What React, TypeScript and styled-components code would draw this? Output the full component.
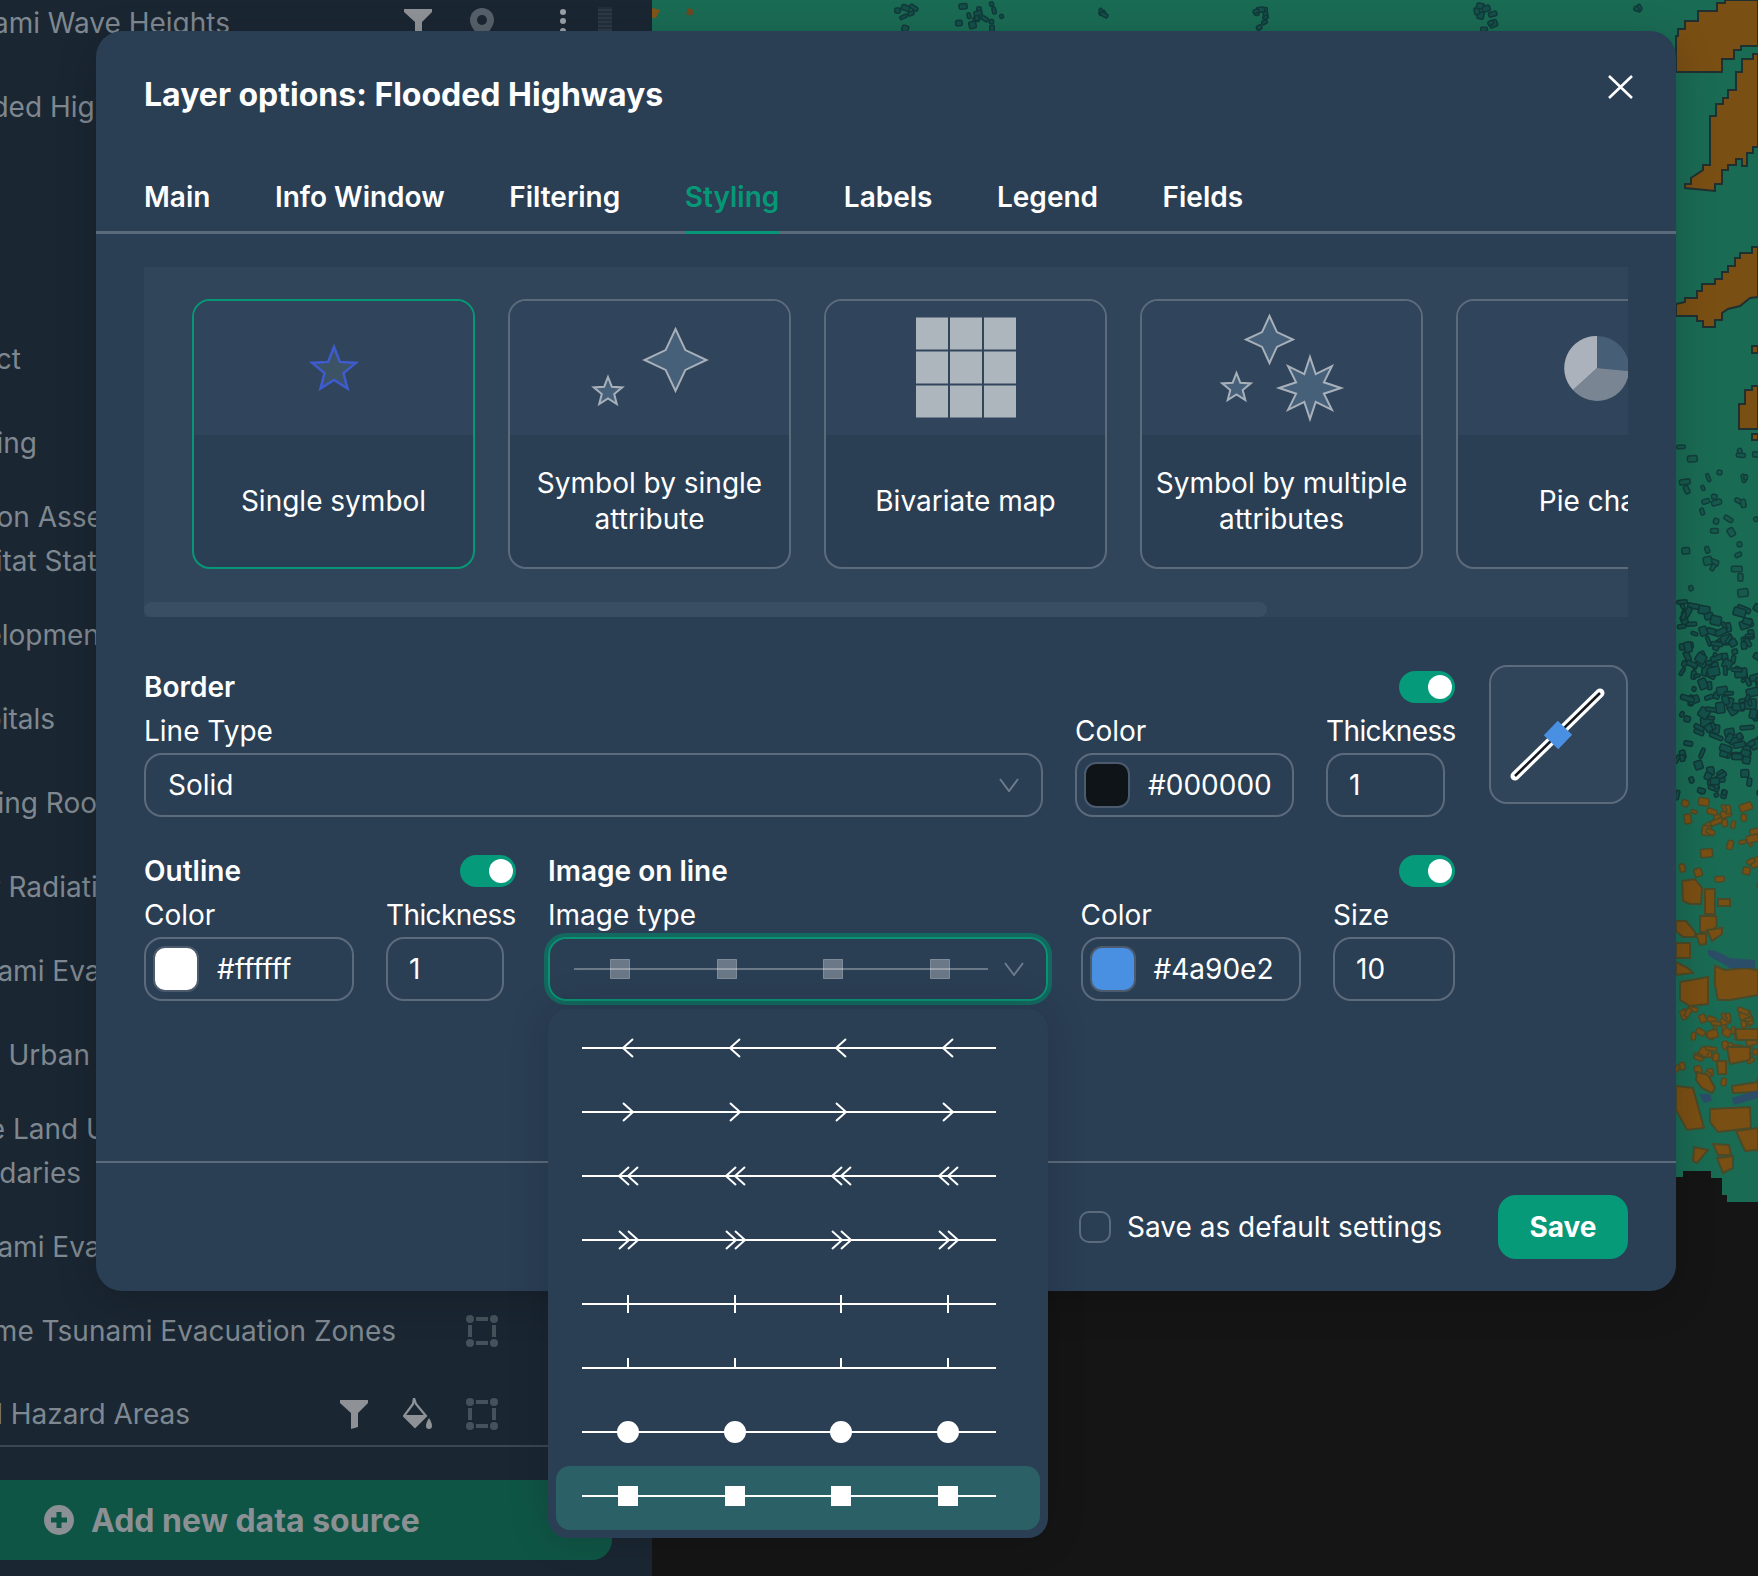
import React, { FC } from "react";
import styled, { createGlobalStyle } from "styled-components";

const GlobalStyle = createGlobalStyle`
  html, body {
    margin: 0;
    padding: 0;
    background: #151515;
  }
  * {
    box-sizing: border-box;
  }
  body {
    font-family: Inter, "Noto Sans", sans-serif;
    color: #fff;
  }
`;

const starPoints = (cx: number, cy: number, outer: number, inner: number, n: number) =>
  Array.from({ length: n * 2 }, (_, i) => {
    const r = i % 2 === 0 ? outer : inner;
    const a = (Math.PI * i) / n - Math.PI / 2;
    return `${(cx + r * Math.cos(a)).toFixed(1)},${(cy + r * Math.sin(a)).toFixed(1)}`;
  }).join(" ");

/* ---------- map ---------- */

const BROWN_AREAS = [
  "1676,36 1678,36 1678,29 1685,29 1685,21 1698,21 1698,11 1717,11 1717,3 1725,3 1725,0 1758,0 1758,46 1741,46 1741,50 1734,50 1734,59 1722,59 1722,72 1676,72",
  "1758,54 1753,54 1753,59 1742,59 1742,72 1736,72 1736,90 1728,90 1728,98 1723,98 1723,104 1716,104 1716,116 1710,116 1710,165 1703,165 1703,170 1691,178 1691,184 1685,184 1685,188 1715,191 1715,184 1722,184 1722,170 1728,170 1728,165 1736,165 1736,159 1742,159 1742,166 1747,166 1747,153 1753,153 1753,147 1758,147",
  "1758,247 1752,247 1752,253 1740,253 1740,258 1735,258 1735,266 1728,266 1728,272 1722,272 1722,279 1715,279 1715,284 1702,284 1702,291 1697,291 1697,298 1685,298 1685,302 1676,304 1676,316 1697,316 1697,321 1703,321 1703,327 1715,327 1715,320 1722,320 1722,313 1728,309 1740,306 1750,298 1758,297",
  "1758,386 1752,386 1752,390 1745,390 1745,404 1739,404 1739,429 1758,429",
  "1752,346 1758,346 1758,353 1752,353",
  "1752,434 1758,434 1758,440 1752,440",
  "1682,881 1695,879 1702,888 1701,904 1690,904 1683,901",
  "1705,889 1715,889 1715,914 1705,914",
  "1718,899 1730,899 1730,906 1718,906",
  "1676,921 1686,921 1695,932 1695,937 1683,937 1676,931",
  "1700,916 1716,916 1717,925 1712,932 1700,932",
  "1707,930 1722,928 1722,934 1712,941",
  "1696,934 1706,934 1706,944 1700,945",
  "1676,943 1690,943 1690,958 1676,958",
  "1676,962 1688,968 1693,973 1676,975",
  "1715,966 1725,970 1745,968 1758,970 1758,995 1730,1000 1718,1000 1715,985",
  "1680,982 1708,977 1708,1004 1690,1006 1680,1000",
  "1697,1072 1708,1075 1715,1088 1712,1093 1702,1088 1696,1080",
  "1676,1086 1693,1088 1704,1128 1687,1130 1676,1110",
  "1710,1109 1750,1107 1751,1128 1718,1132 1710,1122",
  "1736,1131 1758,1128 1758,1150 1745,1151",
  "1694,1147 1708,1150 1697,1163 1693,1161",
  "1713,1144 1729,1145 1731,1155 1718,1155",
  "1717,1158 1733,1156 1733,1168 1723,1173",
  "1735,1029 1758,1029 1758,1040 1737,1040",
  "1727,1047 1750,1047 1750,1060 1730,1064",
  "1717,1061 1726,1061 1726,1074 1718,1074",
  "1732,1086 1758,1082 1758,1092 1733,1093",
];

const WATER = [
  "1708,950 1716,951 1730,958 1755,960 1755,968 1730,968 1716,960 1708,955",
  "1732,1098 1758,1090 1758,1098 1734,1105",
  "1699,1094 1710,1094 1712,1101 1704,1103",
];

const TOP_CLUSTERS = [
  { seed: 3, x: 890, w: 24, n: 6 },
  { seed: 17, x: 952, w: 50, n: 14 },
  { seed: 31, x: 1096, w: 8, n: 3 },
  { seed: 41, x: 1244, w: 24, n: 8 },
  { seed: 53, x: 1472, w: 18, n: 8 },
  { seed: 67, x: 1630, w: 12, n: 2 },
];

const rand = (seed: number) => {
  const v = Math.sin(seed * 127.1) * 43758.5453;
  return v - Math.floor(v);
};

const Blocks: FC<{ count: number; seed: number; x: number; y: number; w: number; h: number; size: number; fill: string; stroke: string }> = ({
  count,
  seed,
  x,
  y,
  w,
  h,
  size,
  fill,
  stroke,
}) => (
  <g fill={fill} stroke={stroke} strokeWidth={1.5}>
    {Array.from({ length: count }, (_, i) => {
      const px = x + rand(seed + i) * w;
      const py = y + rand(seed + i + 0.37) * h;
      const bw = 3 + rand(seed + i + 0.61) * size;
      const bh = 3 + rand(seed + i + 0.83) * size * 0.7;
      const rot = rand(seed + i + 0.11) * 70 - 35;
      return (
        <rect
          key={i}
          x={px}
          y={py}
          width={bw}
          height={bh}
          rx={1.5}
          transform={`rotate(${rot.toFixed(0)} ${px.toFixed(0)} ${py.toFixed(0)})`}
        />
      );
    })}
  </g>
);

const MapView: FC = () => (
  <MapPane>
    <MapSvg viewBox="652 0 1106 1576">
      <polygon
        points="652,0 1758,0 1758,1202 1727,1202 1727,1195 1722,1195 1722,1178 1711,1178 1711,1171 1683,1171 1683,1177 652,1177"
        fill="#1a6b54"
      />
      {TOP_CLUSTERS.map((c) => (
        <Blocks key={c.seed} count={c.n} seed={c.seed} x={c.x} y={2} w={c.w} h={28} size={6} fill="#14504a" stroke="#123a3a" />
      ))}
      <Blocks count={34} seed={11} x={1676} y={445} w={82} h={155} size={8} fill="#165a4c" stroke="#123e3c" />
      <Blocks count={150} seed={29} x={1676} y={600} w={82} h={195} size={11} fill="#14504a" stroke="#113736" />
      <Blocks count={30} seed={47} x={1676} y={795} w={82} h={90} size={10} fill="#7a4f14" stroke="#4a4a28" />
      <Blocks count={50} seed={59} x={1676} y={1005} w={82} h={75} size={9} fill="#7a4f14" stroke="#4f4a26" />
      <g fill="#7a4f14" stroke="#203030" strokeWidth={2}>
        {BROWN_AREAS.slice(0, 6).map((p) => (
          <polygon key={p} points={p} />
        ))}
      </g>
      <g fill="#7a4f14" stroke="#4a4a28" strokeWidth={2}>
        {BROWN_AREAS.slice(6).map((p) => (
          <polygon key={p} points={p} />
        ))}
      </g>
      <g fill="#2c4d68">
        {WATER.map((p) => (
          <polygon key={p} points={p} />
        ))}
      </g>
      <polygon points="652,8 660,10 656,18 652,18" fill="#80551a" />
      <polygon points="688,8 694,10 692,16 686,14" fill="#6a4a20" />
    </MapSvg>
  </MapPane>
);

/* ---------- sidebar ---------- */

const Funnel: FC = () => (
  <svg width="28" height="30" viewBox="0 0 28 30">
    <path d="M0 1H28V4L18 14V28L11 30V14L0 4Z" fill="#8e9296" />
  </svg>
);

const Pin: FC = () => (
  <svg width="26" height="32" viewBox="0 0 26 32">
    <path d="M13 1a12 12 0 0 1 12 12c0 7-7 14-12 19C8 27 1 20 1 13A12 12 0 0 1 13 1Z" fill="#56606a" />
    <circle cx="13" cy="13" r="5" fill="#1a2632" />
  </svg>
);

const Dots: FC = () => (
  <svg width="8" height="32" viewBox="0 0 8 32">
    <circle cx="4" cy="5" r="3" fill="#9ba0a6" />
    <circle cx="4" cy="14" r="3" fill="#9ba0a6" />
    <circle cx="4" cy="24" r="3" fill="#9ba0a6" />
  </svg>
);

const Bucket: FC = () => (
  <svg width="30" height="32" viewBox="0 0 30 32">
    <path d="M11 0 13 6 23 18 12 29 1 18 10 6Z" fill="none" stroke="#8e9296" strokeWidth="2.2" />
    <path d="M1 17H23L12 29Z" fill="#8e9296" />
    <path d="M26 20c2 3 3 6 3 8a3 3 0 0 1-6 0c0-2 1-5 3-8Z" fill="#8e9296" />
  </svg>
);

const Selection: FC = () => (
  <svg width="32" height="32" viewBox="0 0 32 32" fill="#46515b">
    <circle cx="4" cy="4" r="4" />
    <circle cx="28" cy="4" r="4" />
    <circle cx="4" cy="28" r="4" />
    <circle cx="28" cy="28" r="4" />
    <rect x="10" y="2" width="12" height="4" />
    <rect x="10" y="26" width="12" height="4" />
    <rect x="2" y="10" width="4" height="12" />
    <rect x="26" y="10" width="4" height="12" />
  </svg>
);

interface LayerRowData {
  lines: { text: string; end: number }[];
  icons?: ("filter" | "pin" | "bucket" | "selection")[];
  menu?: boolean;
}

const LAYERS: LayerRowData[] = [
  { lines: [{ text: "Tsunami Wave Heights", end: 230 }], icons: ["filter", "pin"], menu: true },
  { lines: [{ text: "Flooded Highways", end: 180 }] },
  { lines: [] },
  { lines: [] },
  { lines: [{ text: "Tsunami Impact", end: 21 }] },
  { lines: [{ text: "Flooding", end: 37 }] },
  {
    lines: [
      { text: "Evacuation Assessment", end: 199 },
      { text: "Habitat Status", end: 128 },
    ],
  },
  { lines: [{ text: "Urban Development", end: 109 }] },
  { lines: [{ text: "Hospitals", end: 55 }] },
  { lines: [{ text: "Parking Rooftops", end: 164 }] },
  { lines: [{ text: "Solar Radiation", end: 131 }] },
  { lines: [{ text: "Tsunami Evacuation", end: 198 }] },
  { lines: [{ text: "Evacuation to Urban", end: 90 }] },
  {
    lines: [
      { text: "Future Land Use", end: 138 },
      { text: "Boundaries", end: 81 },
    ],
  },
  { lines: [{ text: "Tsunami Evacuation", end: 198 }] },
  { lines: [{ text: "Extreme Tsunami Evacuation Zones", end: 396 }], icons: ["selection"] },
  { lines: [{ text: "Flood Hazard Areas", end: 190 }], icons: ["filter", "bucket", "selection"] },
];

const ICONS = {
  filter: <Funnel />,
  pin: <Pin />,
  bucket: <Bucket />,
  selection: <Selection />,
};

const Sidebar: FC = () => (
  <SideColumn>
    <LayerList>
      {LAYERS.map((layer, i) => (
        <LayerRow key={i} $last={i === LAYERS.length - 1}>
          <LayerLines>
            {layer.lines.map((line) => (
              <LayerName key={line.text} $end={line.end}>
                <span>{line.text}</span>
              </LayerName>
            ))}
          </LayerLines>
          <LayerIcons>
            {layer.icons?.map((icon) => (
              <IconSlot key={icon}>{ICONS[icon]}</IconSlot>
            ))}
          </LayerIcons>
          <LayerTrail>
            {layer.menu && (
              <>
                <IconSlot>
                  <Dots />
                </IconSlot>
                <DragStrip />
              </>
            )}
          </LayerTrail>
        </LayerRow>
      ))}
    </LayerList>
    <AddSource>
      <svg width="30" height="30" viewBox="0 0 30 30">
        <circle cx="15" cy="15" r="15" fill="#8b9094" />
        <path d="M15 7v16M7 15h16" stroke="#0f5545" strokeWidth="5" />
      </svg>
      Add new data source
    </AddSource>
  </SideColumn>
);

/* ---------- style cards ---------- */

const SHAPE_FILL = "#46607a";
const SHAPE_LINE = "#a8b0ba";

const CardArt: FC<{ kind: number }> = ({ kind }) => (
  <CardSvg viewBox="2 2 279 134">
    {kind === 0 && (
      <polygon points={starPoints(142, 71, 23, 10, 5)} fill="#3c5366" stroke="#3f5bd0" strokeWidth="2.5" />
    )}
    {kind === 1 && (
      <g fill={SHAPE_FILL} stroke={SHAPE_LINE} strokeWidth="2">
        <polygon points={starPoints(167.5, 61, 31, 14, 4)} />
        <polygon points={starPoints(100, 93, 15, 6.5, 5)} />
      </g>
    )}
    {kind === 2 && (
      <g fill="#adb5bd">
        {[0, 1, 2].map((row) =>
          [0, 1, 2].map((col) => (
            <rect key={`${row}${col}`} x={92 + col * 34} y={18.5 + row * 34} width="32" height="32" />
          ))
        )}
      </g>
    )}
    {kind === 3 && (
      <g fill={SHAPE_FILL} stroke={SHAPE_LINE} strokeWidth="2">
        <polygon points={starPoints(129.5, 40.5, 23.5, 10.5, 4)} />
        <polygon points={starPoints(96.5, 89, 15, 6.5, 5)} />
        <polygon points={starPoints(170, 89, 31, 15, 8)} />
      </g>
    )}
    {kind === 4 && (
      <g>
        <path d="M141 69V37A32 32 0 0 1 173 72Z" fill="#475e77" />
        <path d="M141 69L173 72A32 32 0 0 1 117 91Z" fill="#798592" />
        <path d="M141 69L117 91A32 32 0 0 1 141 37Z" fill="#abb2bb" />
      </g>
    )}
  </CardSvg>
);

const CARDS = ["Single symbol", "Symbol by single attribute", "Bivariate map", "Symbol by multiple attributes", "Pie chart"];

const TABS = ["Main", "Info Window", "Filtering", "Styling", "Labels", "Legend", "Fields"];

/* ---------- line samples ---------- */

type LineKind = "left" | "right" | "left2" | "right2" | "tick" | "halfTick" | "dot" | "square";

const LINE_KINDS: LineKind[] = ["left", "right", "left2", "right2", "tick", "halfTick", "dot", "square"];
const MARK_X = [46, 153, 259, 366];

const Mark: FC<{ kind: LineKind; x: number; muted?: boolean }> = ({ kind, x, muted }) => {
  const y = 30;
  const chevron = (tip: number, back: number) => `M${x + back} ${y - 9}L${x + tip} ${y}L${x + back} ${y + 9}`;
  switch (kind) {
    case "left":
      return <path d={chevron(-5, 5)} fill="none" />;
    case "right":
      return <path d={chevron(5, -5)} fill="none" />;
    case "left2":
      return <path d={`${chevron(-9, 1)}${chevron(0, 10)}`} fill="none" />;
    case "right2":
      return <path d={`${chevron(1, -9)}${chevron(10, 0)}`} fill="none" />;
    case "tick":
      return <path d={`M${x} ${y - 9}V${y + 9}`} />;
    case "halfTick":
      return <path d={`M${x} ${y - 10}V${y}`} />;
    case "dot":
      return <circle cx={x} cy={y} r={10} fill="#fff" />;
    case "square":
      return muted ? (
        <rect x={x - 9.5} y={y - 9.5} width={19} height={19} fill="rgba(255,255,255,.3)" stroke="rgba(255,255,255,.3)" strokeWidth={1} />
      ) : (
        <rect x={x - 10} y={y - 10} width={20} height={20} fill="#fff" stroke="none" />
      );
  }
};

const LineSample: FC<{ kind: LineKind; muted?: boolean }> = ({ kind, muted }) => (
  <SampleSvg viewBox="0 0 414 60">
    <g stroke={muted ? "rgba(255,255,255,.3)" : "#fff"} strokeWidth={2}>
      <path d="M0 30H414" />
      {MARK_X.map((x) => (
        <Mark key={x} kind={kind} x={x} muted={muted} />
      ))}
    </g>
  </SampleSvg>
);

const ChevronDown: FC = () => (
  <ChevronSvg viewBox="0 0 20 14">
    <path d="M1 1L10 13L19 1" fill="none" stroke="#6d7b8b" strokeWidth="2" />
  </ChevronSvg>
);

/* ---------- dialog ---------- */

const ColorInput: FC<{ value: string }> = ({ value }) => (
  <ColorBox>
    <Swatch $color={value} />
    {value}
  </ColorBox>
);

const Toggle: FC = () => (
  <ToggleTrack>
    <ToggleKnob />
  </ToggleTrack>
);

const Dialog: FC = () => (
  <Modal>
    <ModalHeader>
      <ModalTitle>Layer options: Flooded Highways</ModalTitle>
      <CloseButton aria-label="Close">
        <svg width="25" height="24" viewBox="0 0 25 24">
          <path d="M1 1L24 23M24 1L1 23" stroke="#fff" strokeWidth="2.6" />
        </svg>
      </CloseButton>
    </ModalHeader>

    <TabBar>
      {TABS.map((tab) => (
        <Tab key={tab} $active={tab === "Styling"}>
          {tab}
        </Tab>
      ))}
    </TabBar>

    <ModalBody>
      <StylePanel>
        <CardRow>
          {CARDS.map((label, i) => (
            <StyleCard key={label} $active={i === 0}>
              <CardImage>
                <CardArt kind={i} />
              </CardImage>
              <CardLabel>{label}</CardLabel>
            </StyleCard>
          ))}
        </CardRow>
        <ScrollThumb />
      </StylePanel>

      <BorderSection>
        <FormColumn>
          <SectionHeader>
            Border
            <Toggle />
          </SectionHeader>
          <FieldRow>
            <Field $grow>
              <FieldLabel>Line Type</FieldLabel>
              <SelectBox>
                Solid
                <ChevronDown />
              </SelectBox>
            </Field>
            <Field $width={219}>
              <FieldLabel>Color</FieldLabel>
              <ColorInput value="#000000" />
            </Field>
            <Field $width={129}>
              <FieldLabel $narrow>Thickness</FieldLabel>
              <NumberBox $width={119}>1</NumberBox>
            </Field>
          </FieldRow>
        </FormColumn>
        <PreviewBox>
          <svg width="135" height="135" viewBox="1491 667 135 135">
            <path d="M1515 776L1600 693" stroke="#fff" strokeWidth="9" strokeLinecap="round" />
            <path d="M1515 776L1600 693" stroke="#12181d" strokeWidth="2.5" strokeLinecap="butt" />
            <rect x="1548" y="725" width="20" height="20" fill="#4a90e2" transform="rotate(44 1558 735)" />
          </svg>
        </PreviewBox>
      </BorderSection>

      <OptionsRow>
        <OutlineColumn>
          <SectionHeader>
            Outline
            <Toggle />
          </SectionHeader>
          <FieldRow>
            <Field $width={210}>
              <FieldLabel>Color</FieldLabel>
              <ColorInput value="#ffffff" />
            </Field>
            <Field $width={130}>
              <FieldLabel $narrow>Thickness</FieldLabel>
              <NumberBox $width={118}>1</NumberBox>
            </Field>
          </FieldRow>
        </OutlineColumn>
        <ImageColumn>
          <SectionHeader>
            Image on line
            <Toggle />
          </SectionHeader>
          <FieldRow>
            <Field $width={500}>
              <FieldLabel>Image type</FieldLabel>
              <ImageSelect>
                <LineSample kind="square" muted />
                <ChevronDown />
                <LineMenu>
                  {LINE_KINDS.map((kind) => (
                    <LineOption key={kind} $selected={kind === "square"}>
                      <LineSample kind={kind} />
                    </LineOption>
                  ))}
                </LineMenu>
              </ImageSelect>
            </Field>
            <Field $width={220}>
              <FieldLabel>Color</FieldLabel>
              <ColorInput value="#4a90e2" />
            </Field>
            <Field $width={122}>
              <FieldLabel>Size</FieldLabel>
              <NumberBox $width={122}>10</NumberBox>
            </Field>
          </FieldRow>
        </ImageColumn>
      </OptionsRow>
    </ModalBody>

    <ModalFooter>
      <DefaultCheck>
        <CheckBox />
        Save as default settings
      </DefaultCheck>
      <SaveButton>Save</SaveButton>
    </ModalFooter>
  </Modal>
);

const App: FC = () => (
  <Page>
    <GlobalStyle />
    <Sidebar />
    <MapView />
    <Dialog />
  </Page>
);

const Page = styled.div`
  position: relative;
  display: flex;
  width: 1758px;
  height: 1576px;
  overflow: hidden;
`;

const SideColumn = styled.aside`
  width: 652px;
  height: 100%;
  flex: none;
  background: #1a2632;
  overflow: hidden;
`;

const LayerList = styled.div`
  display: flex;
  flex-direction: column;
  gap: 20px;
  margin-top: -9px;
`;

const LayerRow = styled.div<{ $last?: boolean }>`
  display: flex;
  align-items: center;
  min-height: 64px;
  border-bottom: ${(p) => (p.$last ? "2px solid #3b4650" : "none")};
  color: #7f8890;
  font-size: 28px;
  line-height: 44px;
`;

const LayerLines = styled.div`
  flex: 1;
  min-width: 0;
`;

const LayerName = styled.div<{ $end: number }>`
  display: flex;
  justify-content: flex-end;
  width: ${(p) => p.$end}px;
  white-space: nowrap;
  span {
    flex: none;
  }
`;

const LayerIcons = styled.div`
  display: flex;
  gap: 32px;
`;

const IconSlot = styled.div`
  width: 32px;
  height: 32px;
  display: flex;
  justify-content: center;
  align-items: center;
  overflow: visible;
`;

const LayerTrail = styled.div`
  display: flex;
  align-items: center;
  width: 154px;
  flex: none;
  padding-left: 49px;
  gap: 19px;
`;

const DragStrip = styled.div`
  width: 14px;
  height: 32px;
  background: repeating-linear-gradient(0deg, #2c3a45 0 2px, #222f3b 2px 4px);
`;

const AddSource = styled.div`
  display: flex;
  align-items: center;
  gap: 17px;
  width: 612px;
  height: 80px;
  margin-top: 33px;
  padding-left: 44px;
  border-radius: 0 20px 20px 0;
  background: #0f5545;
  color: #8b9094;
  font-size: 32px;
  font-weight: 700;
`;

const MapPane = styled.div`
  flex: 1;
  height: 100%;
  background: #151515;
`;

const MapSvg = styled.svg`
  display: block;
  width: 100%;
  height: 100%;
`;

const Modal = styled.section`
  position: absolute;
  left: 96px;
  top: 31px;
  width: 1580px;
  height: 1260px;
  display: flex;
  flex-direction: column;
  background: #2a3e54;
  border-radius: 26px;
  box-shadow: 0 10px 40px rgba(0, 0, 0, 0.18);
`;

const ModalHeader = styled.header`
  display: flex;
  justify-content: space-between;
  align-items: flex-start;
  height: 121px;
  padding: 44px 43px 0 48px;
`;

const ModalTitle = styled.h2`
  margin: 1px 0 0;
  font-size: 32px;
  line-height: 38px;
  font-weight: 700;
`;

const CloseButton = styled.button`
  display: flex;
  padding: 0;
  border: none;
  background: none;
`;

const TabBar = styled.nav`
  display: flex;
  gap: 64.5px;
  height: 82px;
  padding: 0 48px;
  border-bottom: 3px solid #5b6a7a;
`;

const Tab = styled.div<{ $active?: boolean }>`
  height: 82px;
  padding-top: 27px;
  border-bottom: 3px solid ${(p) => (p.$active ? "#069876" : "transparent")};
  color: ${(p) => (p.$active ? "#069876" : "#fff")};
  font-size: 28px;
  line-height: 36px;
  font-weight: 600;
`;

const ModalBody = styled.div`
  flex: 1;
  padding: 33px 48px 0;
`;

const StylePanel = styled.div`
  height: 350px;
  padding-top: 32px;
  background: #30445a;
  overflow: hidden;
`;

const CardRow = styled.div`
  display: flex;
  gap: 33px;
  padding-left: 48px;
  margin-bottom: 33px;
`;

const StyleCard = styled.div<{ $active?: boolean }>`
  flex: none;
  width: 283px;
  height: 270px;
  border: 2px solid ${(p) => (p.$active ? "#069876" : "#5c6b7b")};
  border-radius: 18px;
  overflow: hidden;
  display: flex;
  flex-direction: column;
  background: #2a3e54;
`;

const CardImage = styled.div`
  height: 134px;
  flex: none;
  background: #30455b;
`;

const CardSvg = styled.svg`
  display: block;
  width: 279px;
  height: 134px;
`;

const CardLabel = styled.div`
  flex: 1;
  display: flex;
  align-items: center;
  justify-content: center;
  padding: 0 8px;
  text-align: center;
  font-size: 28px;
  line-height: 36px;
`;

const ScrollThumb = styled.div`
  width: 1123px;
  height: 15px;
  border-radius: 8px;
  background: #3a4e63;
`;

const BorderSection = styled.div`
  display: flex;
  gap: 34px;
  margin-top: 48px;
`;

const FormColumn = styled.div`
  flex: 1;
  padding-top: 6px;
`;

const PreviewBox = styled.div`
  width: 139px;
  height: 139px;
  flex: none;
  border: 2px solid #5c6b7b;
  border-radius: 18px;
  background: #30445a;
`;

const OptionsRow = styled.div`
  display: flex;
  gap: 32px;
  width: 1311px;
  margin-top: 38px;
`;

const OutlineColumn = styled.div`
  width: 372px;
  flex: none;
`;

const ImageColumn = styled.div`
  flex: 1;
`;

const SectionHeader = styled.div`
  display: flex;
  justify-content: space-between;
  align-items: center;
  height: 32px;
  margin-bottom: 10px;
  font-size: 28px;
  font-weight: 600;
`;

const ToggleTrack = styled.div`
  display: flex;
  justify-content: flex-end;
  align-items: center;
  width: 56px;
  height: 32px;
  padding-right: 3px;
  border-radius: 16px;
  background: #059a79;
`;

const ToggleKnob = styled.div`
  width: 24px;
  height: 24px;
  border-radius: 50%;
  background: #fff;
`;

const FieldRow = styled.div`
  display: flex;
  justify-content: space-between;
  gap: 32px;
`;

const Field = styled.div<{ $grow?: boolean; $width?: number }>`
  flex: ${(p) => (p.$grow ? 1 : "none")};
  width: ${(p) => (p.$width ? `${p.$width}px` : "auto")};
  min-width: 0;
`;

const FieldLabel = styled.div<{ $narrow?: boolean }>`
  height: 36px;
  margin-bottom: 4px;
  font-size: 28px;
  line-height: 36px;
  letter-spacing: ${(p) => (p.$narrow ? "-0.6px" : "normal")};
  white-space: nowrap;
`;

const inputBox = `
  display: flex;
  align-items: center;
  height: 64px;
  border: 2px solid #5c6b7b;
  border-radius: 18px;
  font-size: 28px;
`;

const SelectBox = styled.div`
  ${inputBox}
  justify-content: space-between;
  padding: 0 22px;
`;

const ChevronSvg = styled.svg`
  width: 20px;
  height: 14px;
  flex: none;
`;

const ColorBox = styled.div`
  ${inputBox}
  padding-left: 7px;
  gap: 18px;
  white-space: nowrap;
`;

const Swatch = styled.div<{ $color: string }>`
  width: 46px;
  height: 46px;
  flex: none;
  border: 2px solid #4b5b6d;
  border-radius: 12px;
  background: ${(p) => (p.$color === "#000000" ? "#0f1419" : p.$color)};
`;

const NumberBox = styled.div<{ $width: number }>`
  ${inputBox}
  width: ${(p) => p.$width}px;
  padding-left: 21px;
`;

const ImageSelect = styled.div`
  ${inputBox}
  position: relative;
  padding: 0 22px 0 24px;
  border: 2px solid #0a9274;
  box-shadow: 0 0 0 4px #13695f;
  justify-content: space-between;
`;

const SampleSvg = styled.svg`
  display: block;
  width: 414px;
  height: 60px;
  flex: none;
`;

const LineMenu = styled.div`
  position: absolute;
  left: -2px;
  top: 70px;
  width: 500px;
  padding: 9px 8px 8px;
  border-radius: 20px;
  background: #2a3e54;
  box-shadow: 0 0 40px rgba(0, 0, 0, 0.16);
  z-index: 2;
`;

const LineOption = styled.div<{ $selected?: boolean }>`
  display: flex;
  height: 64px;
  padding-left: 26px;
  border-radius: 14px;
  background: ${(p) => (p.$selected ? "#2a6066" : "transparent")};
`;

const ModalFooter = styled.footer`
  display: flex;
  justify-content: flex-end;
  align-items: center;
  gap: 56px;
  height: 130px;
  padding: 32px 48px;
  border-top: 2px solid #5b6a7a;
`;

const DefaultCheck = styled.label`
  display: flex;
  align-items: center;
  gap: 16px;
  font-size: 28px;
`;

const CheckBox = styled.div`
  width: 32px;
  height: 32px;
  border: 2px solid #5c6b7b;
  border-radius: 10px;
`;

const SaveButton = styled.button`
  width: 130px;
  height: 64px;
  border: none;
  border-radius: 18px;
  background: #069a78;
  color: #fff;
  font-family: inherit;
  font-size: 28px;
  font-weight: 700;
`;

export default App;
